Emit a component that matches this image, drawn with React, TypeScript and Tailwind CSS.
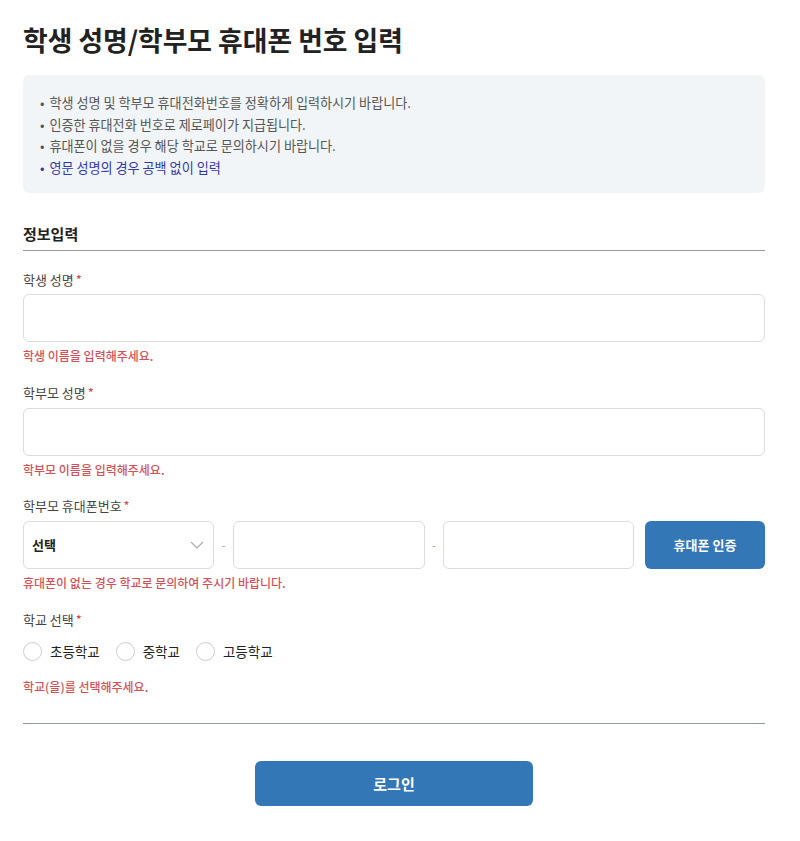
import React from "react";

const notices = [
  { text: "학생 성명 및 학부모 휴대전화번호를 정확하게 입력하시기 바랍니다.", blue: false },
  { text: "인증한 휴대전화 번호로 제로페이가 지급됩니다.", blue: false },
  { text: "휴대폰이 없을 경우 해당 학교로 문의하시기 바랍니다.", blue: false },
  { text: "영문 성명의 경우 공백 없이 입력", blue: true },
];

const schools = ["초등학교", "중학교", "고등학교"];

function Label({ children }: { children: React.ReactNode }) {
  return (
    <div className="text-[13px] text-[#444] leading-[18px]">
      {children}
      <span className="ml-0.5 text-[#d9434f]">*</span>
    </div>
  );
}

function ErrorText({ children }: { children: React.ReactNode }) {
  return <p className="mt-[5px] text-[12px] font-medium text-[#d6505a] leading-[18px]">{children}</p>;
}

export default function App() {
  return (
    <div
      className="w-[800px] min-h-[841px] bg-white px-[23px] pt-[22px]"
      style={{ fontFamily: '"Noto Sans CJK KR", "Noto Sans", sans-serif' }}
    >
      <div className="w-[742px]">
        <h1 className="text-[26.8px] font-bold text-[#222] leading-[36px]">
          학생 성명/학부모 휴대폰 번호 입력
        </h1>

        {/* 안내 박스 */}
        <div className="mt-[17px] h-[118px] rounded-md bg-[#f2f5f8] px-[17px] pt-[17px]">
          <ul className="flex flex-col">
            {notices.map((n) => (
              <li
                key={n.text}
                className={`flex gap-[5px] text-[13.1px] leading-[21.5px] ${n.blue ? "text-[#3137a8]" : "text-[#555]"}`}
              >
                <span>•</span>
                <span>{n.text}</span>
              </li>
            ))}
          </ul>
        </div>

        {/* 정보입력 */}
        <div className="mt-[30px] border-b border-[#999] pb-[5px]">
          <h2 className="text-[15px] font-bold text-[#222] leading-[22px]">정보입력</h2>
        </div>

        <div className="mt-[20px]">
          <Label>학생 성명</Label>
          <input className="mt-[5px] block h-[48px] w-full rounded-md border border-[#d9dde2] px-3 outline-none" />
          <ErrorText>학생 이름을 입력해주세요.</ErrorText>
        </div>

        <div className="mt-[19px]">
          <Label>학부모 성명</Label>
          <input className="mt-[6px] block h-[48px] w-full rounded-md border border-[#d9dde2] px-3 outline-none" />
          <ErrorText>학부모 이름을 입력해주세요.</ErrorText>
        </div>

        <div className="mt-[18px]">
          <Label>학부모 휴대폰번호</Label>
          <div className="mt-[6px] flex items-center h-[48px]">
            <div className="relative flex h-full w-[191px] items-center rounded-md border border-[#d9dde2] pl-[8px]">
              <span className="text-[13px] font-bold text-[#222]">선택</span>
              <svg
                className="absolute right-[9px] top-1/2 -translate-y-1/2"
                width="14"
                height="8"
                viewBox="0 0 14 8"
                fill="none"
              >
                <path d="M1 1l6 6 6-6" stroke="#aaa" strokeWidth="1.1" />
              </svg>
            </div>
            <span className="w-[19px] text-center text-[12px] text-[#aaa]">-</span>
            <input className="block h-full w-[192px] rounded-md border border-[#d9dde2] px-3 outline-none" />
            <span className="w-[18px] text-center text-[12px] text-[#aaa]">-</span>
            <input className="block h-full w-[191px] rounded-md border border-[#d9dde2] px-3 outline-none" />
            <button className="ml-[11px] h-[48px] flex-1 rounded-md bg-[#3477b6] text-[13px] font-bold text-white">
              휴대폰 인증
            </button>
          </div>
          <ErrorText>휴대폰이 없는 경우 학교로 문의하여 주시기 바랍니다.</ErrorText>
        </div>

        <div className="mt-[19px]">
          <Label>학교 선택</Label>
          <div className="mt-[12px] flex items-center gap-[16px]">
            {schools.map((s) => (
              <label key={s} className="flex items-center gap-[8px]">
                <span className="block h-[19px] w-[19px] rounded-full border border-[#c9ced6] bg-white" />
                <span className="text-[13.5px] text-[#222]">{s}</span>
              </label>
            ))}
          </div>
          <p className="mt-[17px] text-[12px] font-medium text-[#d6505a] leading-[18px]">학교(을)를 선택해주세요.</p>
        </div>

        <div className="mt-[27px] border-t border-[#8f98a3]" />

        <div className="mt-[37px] flex justify-center">
          <button className="h-[45px] w-[278px] rounded-md bg-[#3477b6] text-[15px] font-bold text-white">
            로그인
          </button>
        </div>
      </div>
    </div>
  );
}
